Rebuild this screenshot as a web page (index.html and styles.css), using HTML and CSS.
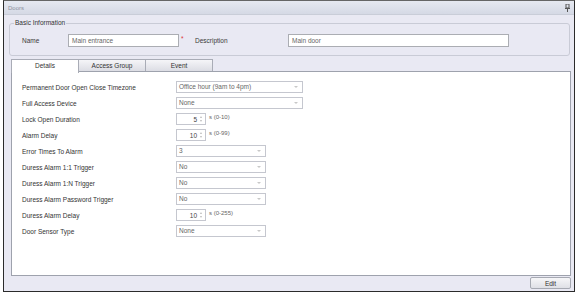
FILE: index.html
```html
<!DOCTYPE html>
<html>
<head>
    <title>Doors</title>
    <link rel="stylesheet" href="styles.css">
</head>
<body>
    <div class="window">
        <div class="titlebar">
            <span>Doors</span>
            <svg class="pin" width="5" height="8" viewBox="0 0 5 8">
                <rect x="1" y="0" width="3" height="4" fill="none" stroke="#555" stroke-width="1"/>
                <rect x="0" y="4" width="5" height="1" fill="#555"/>
                <rect x="2" y="5" width="1" height="3" fill="#555"/>
            </svg>
        </div>

        <div class="content">
            <fieldset class="group">
                <legend>Basic Information</legend>
                <div class="basic-row">
                    <label class="lbl-name">Name</label>
                    <div class="textbox tb-name">Main entrance</div>
                    <span class="required">*</span>
                    <label class="lbl-desc">Description</label>
                    <div class="textbox tb-desc">Main door</div>
                </div>
            </fieldset>

            <div class="tabs">
                <div class="tab active">Details</div>
                <div class="tab">Access Group</div>
                <div class="tab">Event</div>
            </div>

            <div class="panel">
                <div class="form">
                    <div class="label">Permanent Door Open Close Timezone</div>
                    <div class="combo wide">Office hour (9am to 4pm)<span class="arrow"></span></div>

                    <div class="label">Full Access Device</div>
                    <div class="combo wide">None<span class="arrow"></span></div>

                    <div class="label">Lock Open Duration</div>
                    <div class="spin-row"><div class="spin">5<span class="spin-btn"><i class="up"></i><i class="down"></i></span></div><span class="unit">s (0-10)</span></div>

                    <div class="label">Alarm Delay</div>
                    <div class="spin-row"><div class="spin">10<span class="spin-btn"><i class="up"></i><i class="down"></i></span></div><span class="unit">s (0-99)</span></div>

                    <div class="label">Error Times To Alarm</div>
                    <div class="combo narrow">3<span class="arrow"></span></div>

                    <div class="label">Duress Alarm 1:1 Trigger</div>
                    <div class="combo narrow">No<span class="arrow"></span></div>

                    <div class="label">Duress Alarm 1:N Trigger</div>
                    <div class="combo narrow">No<span class="arrow"></span></div>

                    <div class="label">Duress Alarm Password Trigger</div>
                    <div class="combo narrow">No<span class="arrow"></span></div>

                    <div class="label">Duress Alarm Delay</div>
                    <div class="spin-row"><div class="spin">10<span class="spin-btn"><i class="up"></i><i class="down"></i></span></div><span class="unit">s (0-255)</span></div>

                    <div class="label">Door Sensor Type</div>
                    <div class="combo narrow">None<span class="arrow"></span></div>
                </div>
            </div>

            <div class="footer">
                <button class="btn">Edit</button>
            </div>
        </div>
    </div>
</body>
</html>
```

FILE: styles.css
```css
body {
    margin: 0;
    background-color: #fff;
    font-family: 'Liberation Sans', Arial, sans-serif;
    font-size: 6.5px;
    color: #3a3a3a;
}

.window {
    margin: 0 3px;
    height: 290px;
    border: 1px solid #2b2b2b;
    border-top-color: #666;
    display: flex;
    flex-direction: column;
    background-color: #e9e9f3;
}

.titlebar {
    height: 13px;
    flex: none;
    display: flex;
    justify-content: space-between;
    align-items: center;
    padding: 0 4px 0 4px;
    background: linear-gradient(#e6e9f1, #d5d9e5);
    border-bottom: 1px solid #c9cdd8;
    color: #8d91a0;
    font-size: 6px;
}

.content {
    flex: 1;
    display: flex;
    flex-direction: column;
    padding: 0 2px 0 5px;
}

/* Basic information */
.group {
    flex: none;
    margin: 4px 2px 0 0;
    padding: 0;
    border: 1px solid #c9cbd6;
    border-radius: 3px;
    box-sizing: border-box;
    height: 37px;
}

.group legend {
    margin-left: 4px;
    padding: 0 1px;
    line-height: 8px;
    color: #333;
}

.basic-row {
    display: flex;
    align-items: center;
    margin-top: 7px;
}

.lbl-name {
    width: 46px;
    padding-left: 12px;
}

.textbox {
    height: 11px;
    line-height: 11px;
    border: 1px solid #abadb3;
    background-color: #fff;
    padding-left: 3px;
    color: #666;
}

.tb-name {
    width: 106px;
}

.required {
    color: #d33;
    width: 14px;
    padding-left: 2px;
    position: relative;
    top: -2px;
}

.lbl-desc {
    width: 93px;
}

.tb-desc {
    width: 216px;
}

/* Tabs */
.tabs {
    flex: none;
    display: flex;
    margin: 3px 0 0 3px;
    height: 12px;
}

.tab {
    width: 66px;
    text-align: center;
    line-height: 11px;
    border: 1px solid #a9acb6;
    border-bottom: none;
    background: linear-gradient(#f5f5f8, #dcdde4);
    color: #333;
    margin-left: -1px;
}

.tab.active {
    background: #fff;
    height: 13px;
    position: relative;
    z-index: 1;
}

.panel {
    flex: none;
    height: 203px;
    margin: 0 1px 0 2px;
    background-color: #fff;
    border: 1px solid #9ea2ad;
}

/* Details form */
.form {
    display: grid;
    grid-template-columns: 154px auto;
    grid-auto-rows: 16px;
    align-items: center;
    padding: 7px 0 0 10px;
}

.label {
    color: #333;
}

.combo {
    position: relative;
    height: 10px;
    line-height: 10px;
    border: 1px solid #c5c7cf;
    padding-left: 2px;
    color: #666;
    background-color: #fff;
}

.combo.wide {
    width: 123px;
}

.combo.narrow {
    width: 86px;
}

.arrow {
    position: absolute;
    right: 4px;
    top: 4px;
    width: 0;
    height: 0;
    border-left: 2px solid transparent;
    border-right: 2px solid transparent;
    border-top: 2px solid #c8c8c8;
}

.spin-row {
    display: flex;
    align-items: flex-start;
    height: 12px;
}

.spin {
    position: relative;
    width: 20px;
    height: 10px;
    line-height: 11px;
    border: 1px solid #c5c7cf;
    text-align: right;
    padding-right: 8px;
    color: #444;
}

.spin-btn {
    position: absolute;
    right: 1px;
    top: 1px;
    width: 5px;
    height: 8px;
}

.spin-btn i {
    position: absolute;
    left: 1px;
    width: 0;
    height: 0;
    border-left: 1.5px solid transparent;
    border-right: 1.5px solid transparent;
}

.spin-btn .up {
    top: 1px;
    border-bottom: 2px solid #bbb;
}

.spin-btn .down {
    bottom: 1px;
    border-top: 2px solid #bbb;
}

.unit {
    margin-left: 3px;
    font-size: 6px;
    color: #666;
    line-height: 9px;
}

/* Footer */
.footer {
    flex: 1;
    display: flex;
    justify-content: flex-end;
    align-items: flex-end;
    padding: 0 1px 2px 0;
}

.btn {
    width: 41px;
    height: 12px;
    padding: 0;
    font-family: 'Liberation Sans', Arial, sans-serif;
    font-size: 6.5px;
    color: #333;
    border: 1px solid #a6a9b2;
    border-radius: 2px;
    background: linear-gradient(#f6f6f8, #dfe0e6);
}
```
